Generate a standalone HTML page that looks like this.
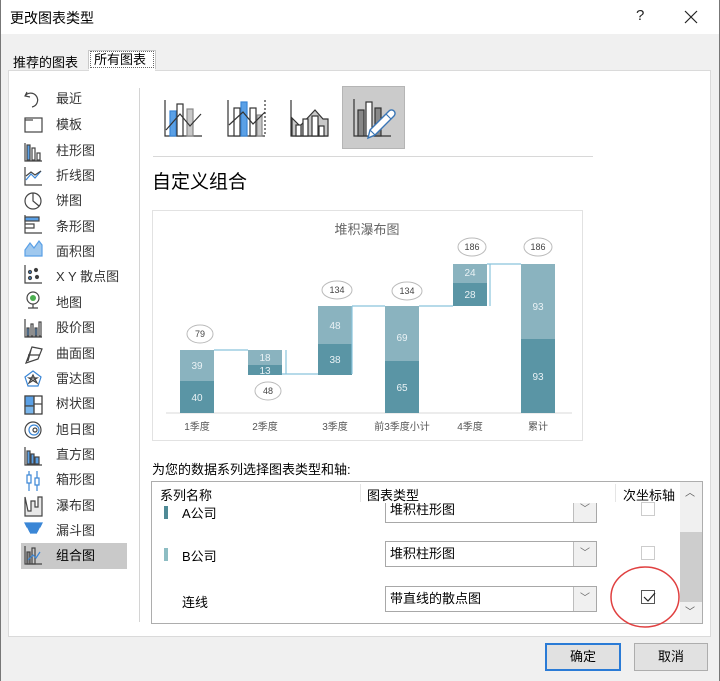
<!DOCTYPE html>
<html><head><meta charset="utf-8"><style>
*{margin:0;padding:0;box-sizing:border-box}
body{width:720px;height:681px;background:#f0f0f0;font-family:"Liberation Sans","Noto Sans CJK SC",sans-serif;position:relative;overflow:hidden;color:#000;font-size:13px}
.a{position:absolute}
.li{position:absolute;left:56px;font-size:13px;color:#333;line-height:16px}
.dd{position:absolute;left:385px;width:212px;height:26px;border:1px solid #a8a8a8;background:#fff;font-size:13px;line-height:24px;padding-left:4px}
.dd b{position:absolute;right:0;top:0;width:23px;height:24px;border-left:1px solid #bdbdbd;background:#f0f0f0;font-weight:normal;color:#666;text-align:center;font-size:10px}
.cb{position:absolute;left:641px;width:14px;height:14px;border:1px solid #ccc;background:#fff}
</style></head><body>
<div class="a" style="left:0;top:0;width:720px;height:34px;background:#fff"></div>
<div class="a" style="left:10px;top:8px;font-size:14px">更改图表类型</div>
<div class="a" style="left:636px;top:7px;font-size:15px;color:#222">?</div>
<svg class="a" style="left:684px;top:10px" width="14" height="14"><path d="M1 1L13 13M13 1L1 13" stroke="#222" stroke-width="1.2"/></svg>
<div class="a" style="left:0;top:0;width:1px;height:681px;background:#777"></div>
<div class="a" style="left:719px;top:0;width:1px;height:681px;background:#777"></div>
<div class="a" style="left:13px;top:52px;font-size:13px">推荐的图表</div>
<div class="a" style="left:88px;top:50px;width:68px;height:19px;border:1px solid #c8c8c8;border-bottom:none;background:#fff"></div>
<div class="a" style="left:90px;top:51px;width:64px;height:17px;border:1px dotted #666;font-size:13px;padding-left:3px;line-height:15px">所有图表</div>
<div class="a" style="left:8px;top:70px;width:703px;height:567px;background:#fff;border:1px solid #dadada"></div>
<div class="a" style="left:89px;top:68px;width:66px;height:4px;background:#fff"></div>
<div class="a" style="left:139px;top:88px;width:1px;height:534px;background:#d4d4d4"></div>
<div class="a" style="left:21px;top:543px;width:106px;height:26px;background:#c9c9c9"></div>

<div class="li" style="top:91px">最近</div>
<div class="li" style="top:117px">模板</div>
<div class="li" style="top:143px">柱形图</div>
<div class="li" style="top:168px">折线图</div>
<div class="li" style="top:193px">饼图</div>
<div class="li" style="top:219px">条形图</div>
<div class="li" style="top:244px">面积图</div>
<div class="li" style="top:269px">X Y 散点图</div>
<div class="li" style="top:295px">地图</div>
<div class="li" style="top:320px">股价图</div>
<div class="li" style="top:346px">曲面图</div>
<div class="li" style="top:371px">雷达图</div>
<div class="li" style="top:396px">树状图</div>
<div class="li" style="top:422px">旭日图</div>
<div class="li" style="top:447px">直方图</div>
<div class="li" style="top:472px">箱形图</div>
<div class="li" style="top:498px">瀑布图</div>
<div class="li" style="top:523px">漏斗图</div>
<div class="li" style="top:548px;color:#000">组合图</div>

<svg class="a" style="left:22px;top:88px" width="24" height="480" fill="none" stroke="#444" stroke-width="1.2">
<path d="M5 4 L3 8 L8 9 M3 8 A7 7 0 1 1 10 19"/>
<rect x="3" y="30" width="17" height="14"/><path d="M3 32h8"/>
<path d="M3 55v18h17"/><rect x="5" y="57" width="3" height="15" fill="#5aa0e6"/><rect x="10" y="60" width="3" height="12"/><rect x="15" y="65" width="3" height="7"/>
<path d="M3 79v18h17"/><path d="M4 92l5-6 4 4 6-7" stroke="#3a86d6"/><path d="M4 88l5-4 4 3 6-4"/>
<circle cx="11" cy="113" r="8"/><path d="M11 105v8l6 5"/>
<path d="M3 127v18h17"/><rect x="3" y="129" width="14" height="4" fill="#5aa0e6"/><path d="M3 136h9v4h-9"/>
<path d="M3 162l5-7 4 5 5-7 3 4v11h-17z" fill="#9fc8ee" stroke="#5aa0e6"/>
<path d="M3 177v18h17"/><circle cx="8" cy="184" r="1.5" fill="#3a86d6"/><circle cx="14" cy="182" r="1.5" fill="#333"/><circle cx="8" cy="190" r="1.5" fill="#3a86d6"/><circle cx="15" cy="189" r="1.5" fill="#333"/>
<circle cx="11" cy="210" r="6"/><circle cx="11" cy="210" r="3" fill="#4caf50" stroke="none"/><path d="M6 220h10M11 216v4"/>
<path d="M3 231v18h17"/><rect x="5" y="240" width="2" height="8" fill="#5aa0e6"/><rect x="9" y="236" width="2" height="12"/><rect x="13" y="240" width="2" height="8" fill="#5aa0e6"/><rect x="17" y="234" width="2" height="14"/>
<path d="M4 275l6-16 10 2-4 10z M6 267h12M9 262l-3 11"/>
<path d="M11 283l8 6-3 9h-10l-3-9z" stroke="#3a86d6"/><path d="M11 287l4 8-8-5h8l-8 5z"/>
<rect x="3" y="308" width="17" height="18" stroke="#333"/><rect x="3" y="308" width="9" height="10" fill="#5aa0e6"/><rect x="3" y="318" width="9" height="8" fill="#7ab6ec"/><path d="M12 308v18M12 316h8"/>
<circle cx="11" cy="342" r="8"/><circle cx="12" cy="342" r="5" stroke="#3a86d6"/><circle cx="13" cy="342" r="2"/>
<path d="M3 359v18h17"/><rect x="5" y="363" width="3" height="13" fill="#5aa0e6"/><rect x="9" y="366" width="3" height="10" fill="#5aa0e6"/><rect x="13" y="369" width="4" height="7" fill="#5aa0e6"/>
<path d="M7 383v20M15 383v20" stroke="#3a86d6"/><rect x="5" y="387" width="4" height="8" fill="#fff" stroke="#3a86d6"/><rect x="13" y="390" width="4" height="7" fill="#fff" stroke="#3a86d6"/>
<path d="M3 409v19h17v-19h-4v10h-3v-6h-4v10h-3z" fill="#e8e8e8"/>
<path d="M3 435h17l-2 4h-13z M6 440h11l-2 4h-7z M8 445h7" fill="#3a86d6" stroke="#3a86d6"/>
<path d="M3 458v18h17"/><rect x="5" y="464" width="3" height="12" fill="#888"/><rect x="10" y="460" width="3" height="16"/><path d="M6 472l5-5 3 3 4-6" stroke="#3a86d6"/>
</svg>

<div class="a" style="left:342px;top:86px;width:63px;height:63px;background:#cbcbcb;border:1px solid #b5b5b5"></div>
<svg class="a" style="left:150px;top:80px" width="270" height="80" fill="none" stroke="#333" stroke-width="1.2">
<path d="M15 20v36h37"/><rect x="20" y="31" width="6" height="25" fill="#5aa0e6" stroke="#3a86d6"/><rect x="27" y="24" width="6" height="32" fill="#fff"/><rect x="37" y="29" width="6" height="27" fill="#c8c8c8" stroke="#888"/><path d="M16 50l14-16 10 12 11-12"/>
<path d="M78 20v36h37"/><path d="M115 20v36" stroke-dasharray="2 2"/><rect x="84" y="28" width="6" height="28" fill="#fff"/><rect x="91" y="22" width="6" height="34" fill="#5aa0e6" stroke="#3a86d6"/><rect x="100" y="28" width="6" height="28" fill="#fff"/><rect x="107" y="35" width="5" height="21" fill="#c8c8c8" stroke="#888"/><path d="M79 45l14-13 10 12 12-12"/>
<path d="M141 20v36h37"/><path d="M142 38l8 8 15-16 8 9h5v17h-36z" fill="#c8c8c8"/><rect x="146" y="45" width="5" height="11" fill="#fff"/><rect x="153" y="39" width="5" height="17" fill="#fff"/><rect x="162" y="36" width="6" height="20" fill="#fff"/><rect x="169" y="46" width="5" height="10" fill="#fff"/>
<path d="M204 19v37h37"/><rect x="208" y="30" width="6" height="26" fill="#888"/><rect x="216" y="22" width="6" height="34" fill="#fff"/><rect x="225" y="28" width="6" height="28" fill="#888"/>
<path d="M218 58l2-8 19-19a2.5 2.5 0 0 1 5 5l-19 19z" fill="#fff" stroke="#3a76b6" stroke-width="1.4"/><path d="M220 50l5 5M236 34l5 5" stroke="#3a76b6"/>
</svg>
<div class="a" style="left:153px;top:156px;width:440px;height:1px;background:#d8d8d8"></div>
<div class="a" style="left:152px;top:167px;font-size:19px">自定义组合</div>

<svg class="a" style="left:152px;top:210px" width="431" height="231" font-family="Liberation Sans,Noto Sans CJK SC,sans-serif">
<rect x="0.5" y="0.5" width="430" height="230" fill="#fff" stroke="#e2e2e2"/>
<text x="215" y="24" font-size="13" fill="#666" text-anchor="middle">堆积瀑布图</text>
<line x1="14" y1="203" x2="420" y2="203" stroke="#d8d8d8"/>
<g fill="#5a95a5">
<rect x="28" y="171" width="34" height="32"/><rect x="96" y="155" width="34" height="10"/><rect x="166" y="134" width="34" height="31"/><rect x="233" y="151" width="34" height="52"/><rect x="301" y="73" width="34" height="23"/><rect x="369" y="129" width="34" height="74"/>
</g>
<g fill="#8ab3bf">
<rect x="28" y="140" width="34" height="31"/><rect x="96" y="140" width="34" height="15"/><rect x="166" y="96" width="34" height="38"/><rect x="233" y="96" width="34" height="55"/><rect x="301" y="54" width="34" height="19"/><rect x="369" y="54" width="34" height="75"/>
</g>
<g stroke="#8ac4dc" stroke-width="1.2" fill="none">
<path d="M62 140h34M130 164h36M200 96h33M267 96h34M335 54h34"/>
<path d="M134 140v24M200 164v-68M338 96v-42"/>
</g>
<g fill="#eaf2f5" font-size="10" text-anchor="middle">
<text x="45" y="191">40</text><text x="45" y="159">39</text><text x="113" y="164">13</text><text x="113" y="151">18</text><text x="183" y="153">38</text><text x="183" y="119">48</text><text x="250" y="181">65</text><text x="250" y="131">69</text><text x="318" y="88">28</text><text x="318" y="66">24</text><text x="386" y="170">93</text><text x="386" y="100">93</text>
</g>
<g fill="#fff" stroke="#bbb"><ellipse cx="48" cy="124" rx="13" ry="9"/><ellipse cx="116" cy="181" rx="13" ry="9"/><ellipse cx="185" cy="80" rx="15" ry="9"/><ellipse cx="255" cy="81" rx="15" ry="9"/><ellipse cx="320" cy="37" rx="14" ry="9"/><ellipse cx="386" cy="37" rx="14" ry="9"/></g>
<g fill="#444" font-size="9" text-anchor="middle"><text x="48" y="127">79</text><text x="116" y="184">48</text><text x="185" y="83">134</text><text x="255" y="84">134</text><text x="320" y="40">186</text><text x="386" y="40">186</text></g>
<g fill="#555" font-size="10" text-anchor="middle"><text x="45" y="220">1季度</text><text x="113" y="220">2季度</text><text x="183" y="220">3季度</text><text x="250" y="220">前3季度小计</text><text x="318" y="220">4季度</text><text x="386" y="220">累计</text></g>
</svg>

<div class="a" style="left:152px;top:459px;font-size:13px">为您的数据系列选择图表类型和轴:</div>
<div class="a" style="left:151px;top:481px;width:552px;height:143px;border:1px solid #adadad;background:#fff"></div>
<div class="dd" style="top:497px;height:26px">堆积柱形图<b>﹀</b></div>
<div class="a" style="left:152px;top:482px;width:528px;height:21px;background:#fff"></div>
<div class="a" style="left:160px;top:485px;font-size:13px">系列名称</div>
<div class="a" style="left:360px;top:484px;width:1px;height:18px;background:#e5e5e5"></div>
<div class="a" style="left:367px;top:485px;font-size:13px">图表类型</div>
<div class="a" style="left:615px;top:484px;width:1px;height:18px;background:#e5e5e5"></div>
<div class="a" style="left:623px;top:485px;font-size:13px">次坐标轴</div>
<div class="a" style="left:680px;top:482px;width:22px;height:141px;background:#f0f0f0"></div>
<div class="a" style="left:680px;top:532px;width:22px;height:70px;background:#cdcdcd"></div>
<div class="a" style="left:685px;top:484px;font-size:10px;color:#555">︿</div>
<div class="a" style="left:685px;top:603px;font-size:10px;color:#555">﹀</div>

<div class="a" style="left:164px;top:506px;width:4px;height:13px;background:#4f8a96"></div>
<div class="a" style="left:182px;top:503px;font-size:13px">A公司</div>
<div class="a" style="left:164px;top:548px;width:4px;height:13px;background:#8dbdc3"></div>
<div class="a" style="left:182px;top:546px;font-size:13px">B公司</div>
<div class="a" style="left:182px;top:592px;font-size:13px">连线</div>
<div class="dd" style="top:541px">堆积柱形图<b>﹀</b></div>
<div class="dd" style="top:586px">带直线的散点图<b>﹀</b></div>
<div class="cb" style="top:502px"></div>
<div class="cb" style="top:546px"></div>
<div class="cb" style="top:590px;border-color:#555"></div>
<svg class="a" style="left:605px;top:560px" width="80" height="76"><polyline points="39,37 43,41 50,33" fill="none" stroke="#222" stroke-width="1.2"/><ellipse cx="40" cy="37" rx="34" ry="30" fill="none" stroke="#e04040" stroke-width="1.5"/></svg>

<div class="a" style="left:545px;top:643px;width:76px;height:28px;border:2px solid #2a7bd6;background:#e1e1e1;text-align:center;line-height:24px;font-size:13px">确定</div>
<div class="a" style="left:634px;top:643px;width:74px;height:28px;border:1px solid #adadad;background:#e1e1e1;text-align:center;line-height:26px;font-size:13px">取消</div>
</body></html>
